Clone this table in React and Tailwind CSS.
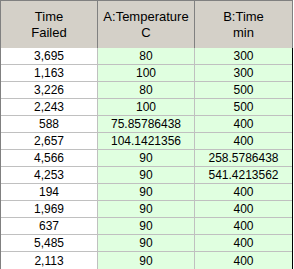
import React from "react";

const rows = [
  ["3,695", "80", "300"],
  ["1,163", "100", "300"],
  ["3,226", "80", "500"],
  ["2,243", "100", "500"],
  ["588", "75.85786438", "400"],
  ["2,657", "104.1421356", "400"],
  ["4,566", "90", "258.5786438"],
  ["4,253", "90", "541.4213562"],
  ["194", "90", "400"],
  ["1,969", "90", "400"],
  ["637", "90", "400"],
  ["5,485", "90", "400"],
  ["2,113", "90", "400"],
];

export default function App() {
  return (
    <div
      className="w-[293px] h-[269px] border-l border-t border-[#808080] bg-white text-black"
      style={{ fontFamily: '"Liberation Sans", Arial, sans-serif' }}
    >
      <div className="flex h-[47px] bg-[#d4d0c8] border-r border-[#808080] text-[13px] leading-[16px]">
        <div className="w-[97px] border-r border-[#808080] flex items-center justify-center text-center">
          Time<br />Failed
        </div>
        <div className="w-[97px] border-r border-[#808080] flex items-center justify-center text-center">
          A:Temperature<br />C
        </div>
        <div className="w-[97px] flex items-center justify-center text-center">
          B:Time<br />min
        </div>
      </div>
      <div className="border-r border-b border-black text-[12px]">
        {rows.map((r, i) => (
          <div
            key={i}
            className={
              "flex h-[17px] " +
              (i < rows.length - 1 ? "border-b border-[#c0c0c0]" : "")
            }
          >
            <div className="w-[97px] border-r border-[#c0c0c0] bg-white flex items-center justify-center leading-[16px]">
              {r[0]}
            </div>
            <div className="w-[97px] border-r border-[#c0c0c0] bg-[#e0ffe0] flex items-center justify-center leading-[16px]">
              {r[1]}
            </div>
            <div className="w-[97px] bg-[#e0ffe0] flex items-center justify-center leading-[16px]">
              {r[2]}
            </div>
          </div>
        ))}
      </div>
    </div>
  );
}
